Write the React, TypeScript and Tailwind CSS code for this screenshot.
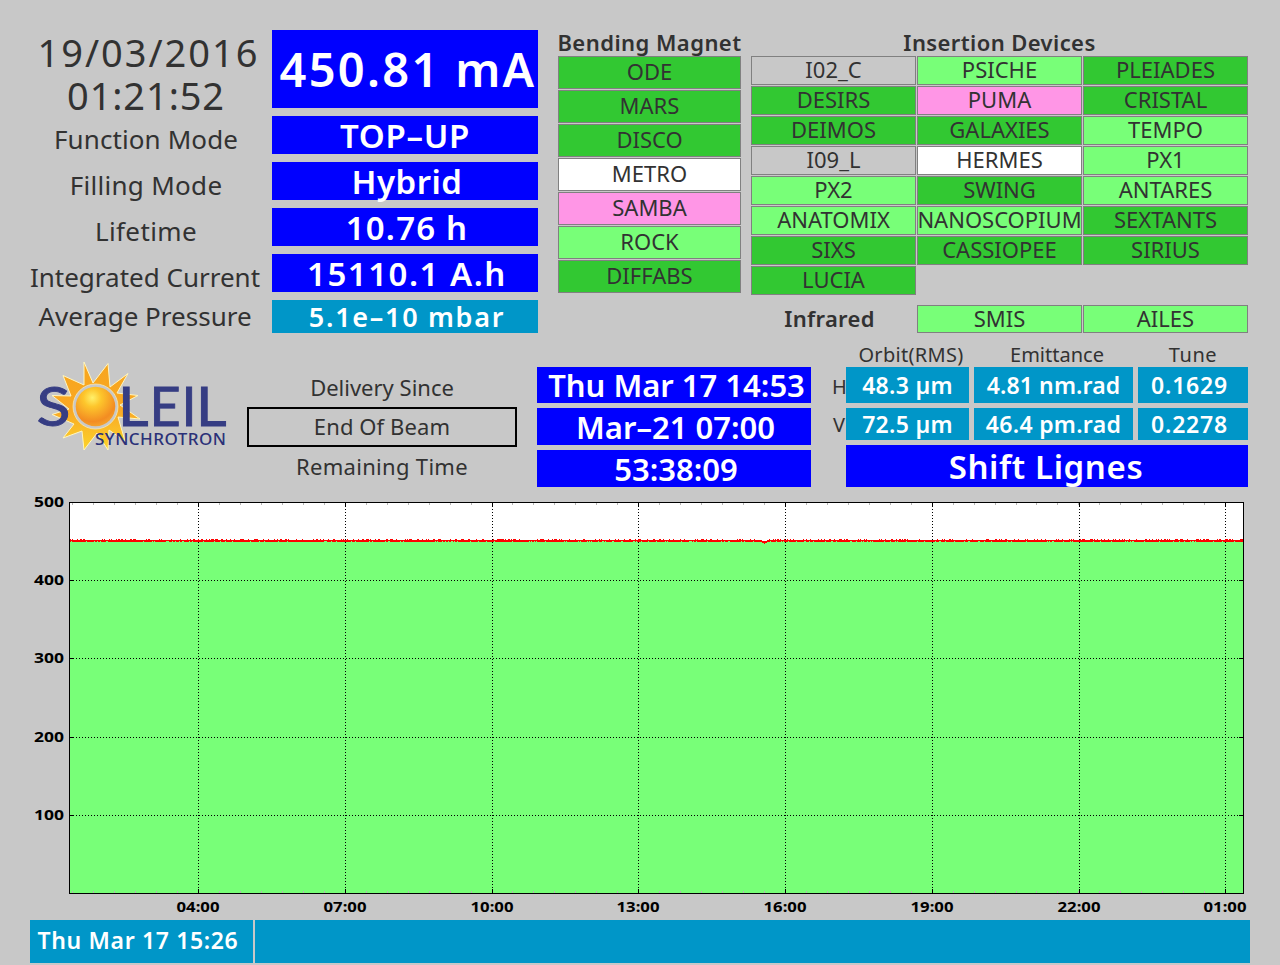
import clsx from 'clsx';

type Status = 'open' | 'ready' | 'fault' | 'closed' | 'none';

const statusColor: Record<Status, string> = {
  open: 'bg-[#32c832]',
  ready: 'bg-[#78ff78]',
  fault: 'bg-[#ff96e6]',
  closed: 'bg-white',
  none: 'bg-transparent',
};

type Line = { name: string; status: Status };

const bendingMagnets: Line[] = [
  { name: 'ODE', status: 'open' },
  { name: 'MARS', status: 'open' },
  { name: 'DISCO', status: 'open' },
  { name: 'METRO', status: 'closed' },
  { name: 'SAMBA', status: 'fault' },
  { name: 'ROCK', status: 'ready' },
  { name: 'DIFFABS', status: 'open' },
];

const insertionDevices: Line[] = [
  { name: 'I02_C', status: 'none' },
  { name: 'PSICHE', status: 'ready' },
  { name: 'PLEIADES', status: 'open' },
  { name: 'DESIRS', status: 'open' },
  { name: 'PUMA', status: 'fault' },
  { name: 'CRISTAL', status: 'open' },
  { name: 'DEIMOS', status: 'open' },
  { name: 'GALAXIES', status: 'open' },
  { name: 'TEMPO', status: 'ready' },
  { name: 'I09_L', status: 'none' },
  { name: 'HERMES', status: 'closed' },
  { name: 'PX1', status: 'ready' },
  { name: 'PX2', status: 'ready' },
  { name: 'SWING', status: 'open' },
  { name: 'ANTARES', status: 'ready' },
  { name: 'ANATOMIX', status: 'ready' },
  { name: 'NANOSCOPIUM', status: 'ready' },
  { name: 'SEXTANTS', status: 'open' },
  { name: 'SIXS', status: 'open' },
  { name: 'CASSIOPEE', status: 'open' },
  { name: 'SIRIUS', status: 'open' },
  { name: 'LUCIA', status: 'open' },
];

function LineCell({ line, className }: { line: Line; className: string }) {
  return (
    <div
      className={clsx(
        'flex items-center justify-center border border-[#808080] pb-[3px] text-[22px] leading-none whitespace-nowrap',
        statusColor[line.status],
        className,
      )}
    >
      {line.name}
    </div>
  );
}

function Value({ children, className }: { children: string; className: string }) {
  return (
    <div className={clsx('flex items-center justify-center leading-none font-semibold whitespace-nowrap text-white', className)}>
      {children}
    </div>
  );
}

/** Date, machine modes and beam current. */
function MachinePanel() {
  return (
    <section className="flex h-[303px] w-[518px]">
      <div className="flex w-[252px] flex-col items-center text-[26px] leading-none whitespace-nowrap">
        <div className="flex h-[43px] items-center pl-[5px] text-[38px] tracking-[2px]">19/03/2016</div>
        <div className="flex h-[43px] items-center text-[38px] tracking-[0.9px]">01:21:52</div>
        <div className="flex h-[46px] items-center tracking-[0.1px]">Function Mode</div>
        <div className="flex h-[46px] items-center tracking-[0.3px]">Filling Mode</div>
        <div className="flex h-[46px] items-center tracking-[0.4px]">Lifetime</div>
        <div className="flex h-[46px] items-center pr-[2px]">Integrated Current</div>
        <div className="flex h-[33px] items-center pr-[2px] pb-0.5">Average Pressure</div>
      </div>
      <div className="flex w-[266px] flex-col gap-2 text-[33px]">
        <Value className="h-[78px] bg-[#0000ff] pl-1.5 text-[47px] tracking-[2.3px]">450.81 mA</Value>
        <Value className="h-[38px] bg-[#0000ff] tracking-[0.7px]">TOP–UP</Value>
        <Value className="h-[38px] bg-[#0000ff] pl-1 tracking-[0.5px]">Hybrid</Value>
        <Value className="h-[38px] bg-[#0000ff] pl-1 tracking-[1.2px]">10.76 h</Value>
        <Value className="h-[38px] bg-[#0000ff] pl-1 tracking-[1.5px]">15110.1 A.h</Value>
        <Value className="h-[33px] bg-[#0096c8] pl-1 text-[27px] tracking-[1.7px]">5.1e–10 mbar</Value>
      </div>
    </section>
  );
}

const panelHeading = 'flex items-center justify-center text-[22px] leading-none font-semibold whitespace-nowrap';

function BeamlinePanel() {
  return (
    <section className="flex gap-2.5">
      <div className="w-[183px]">
        <h2 className={clsx(panelHeading, 'h-[26px] pb-0.5 tracking-[0.45px]')}>Bending Magnet</h2>
        <div className="flex flex-col gap-px">
          {bendingMagnets.map((line) => (
            <LineCell key={line.name} line={line} className="h-[33px]" />
          ))}
        </div>
      </div>
      <div className="w-[497px]">
        <h2 className={clsx(panelHeading, 'h-[26px] pb-0.5 tracking-[0.4px]')}>Insertion Devices</h2>
        <div className="grid grid-cols-3 gap-px">
          {insertionDevices.map((line) => (
            <LineCell key={line.name} line={line} className="h-[29px]" />
          ))}
        </div>
        <div className="mt-2.5 grid grid-cols-3 gap-px">
          <h2 className={clsx(panelHeading, 'h-7 pr-2 pb-0.5 tracking-[0.3px]')}>Infrared</h2>
          <LineCell line={{ name: 'SMIS', status: 'ready' }} className="h-7" />
          <LineCell line={{ name: 'AILES', status: 'ready' }} className="h-7" />
        </div>
      </div>
    </section>
  );
}

function Logo() {
  return (
    <svg width="196" height="100" viewBox="34 358 196 100" className="-mt-[9px] block">
      <defs>
        <radialGradient id="disc" cx="0.42" cy="0.28" r="0.75">
          <stop offset="0" stopColor="#fff06a" />
          <stop offset="0.3" stopColor="#fdc62c" />
          <stop offset="0.8" stopColor="#f38c22" />
          <stop offset="1" stopColor="#f5a52c" />
        </radialGradient>
        <linearGradient id="rays" x1="0" y1="0" x2="0" y2="1">
          <stop offset="0" stopColor="#f7a51c" />
          <stop offset="0.55" stopColor="#f9a825" />
          <stop offset="1" stopColor="#fcd42b" />
        </linearGradient>
      </defs>
      <path
        d="M84 362 L93 383 L108 363.500 L110 387 L128 373.500 L117 393 L138 395.500 L120 405 L140 419 L118 417 L125 441 L109 430 L108 450 L97 433 L84 450 L82 431 L63 438 L74 424 L52 414.500 L69 409 L52 395.500 L71 396 L63 375.500 L84 385 Z"
        fill="url(#rays)"
        stroke="#fff6c0"
        strokeWidth="1"
      />
      <circle cx="95.500" cy="406.500" r="22.500" fill="#c8c8c8" stroke="#f6e7b4" strokeWidth="0.8" />
      <circle cx="95.500" cy="406.500" r="19.800" fill="url(#disc)" />
      <g fill="#363d83" stroke="#363d83" fontFamily="Lato, sans-serif" fontSize="54" strokeWidth="0.9">
        <text x="36.500" y="426" textLength="34" lengthAdjust="spacingAndGlyphs">
          S
        </text>
        <text x="118" y="426" textLength="30.500" lengthAdjust="spacingAndGlyphs">
          L
        </text>
        <text x="149.500" y="426">
          E
        </text>
        <text x="181.500" y="426">
          I
        </text>
        <text x="196" y="426" textLength="30.500" lengthAdjust="spacingAndGlyphs">
          L
        </text>
      </g>
      <text x="95" y="445" textLength="131" fill="#2b3178" fontFamily="Noto Sans, sans-serif" fontSize="17" fontWeight="500">
        SYNCHROTRON
      </text>
    </svg>
  );
}

function DeliveryPanel() {
  return (
    <section className="flex h-[120px] w-[777px] text-[22px] leading-none">
      <div className="w-[213px]">
        <Logo />
      </div>
      <div className="flex w-[270px] flex-col items-center">
        <div className="flex h-10 items-center">Delivery Since</div>
        <div className="flex h-10 w-full items-center justify-center border-2 border-black pb-0.5 tracking-[0.1px]">
          End Of Beam
        </div>
        <div className="flex h-10 items-center pb-0.5 tracking-[0.3px]">Remaining Time</div>
      </div>
      <div className="ml-5 flex w-[274px] flex-col gap-[5px] text-[31px]">
        <Value className="h-9 bg-[#0000ff] pl-[5px]">Thu Mar 17 14:53</Value>
        <Value className="h-[37px] bg-[#0000ff] pt-px pl-[3px]">Mar–21 07:00</Value>
        <Value className="h-[37px] bg-[#0000ff] pt-px pl-1">53:38:09</Value>
      </div>
    </section>
  );
}

function OpticsPanel() {
  return (
    <section className="-mt-6 ml-[21px] w-[416px] text-[20px] leading-none">
      <div className="grid grid-cols-[9px_123px_159px_110px] gap-x-[5px]">
        <span />
        <span className="flex h-6 items-center justify-center pl-[7px] tracking-[0.3px]">Orbit(RMS)</span>
        <span className="flex h-6 items-center justify-center pl-[7px]">Emittance</span>
        <span className="flex h-6 items-center justify-center tracking-[0.6px]">Tune</span>
      </div>
      <div className="flex">
        <div className="flex w-3.5 flex-col">
          <span className="flex h-10 items-center">H</span>
          <span className="flex h-9 items-center pl-px">V</span>
        </div>
        <div className="flex flex-col gap-[5px] text-[23px]">
          <div className="flex gap-[5px]">
            <Value className="h-9 w-[123px] bg-[#0096c8] tracking-[0.3px]">48.3 µm</Value>
            <Value className="h-9 w-[159px] bg-[#0096c8] tracking-[0.1px]">4.81 nm.rad</Value>
            <Value className="h-9 w-[110px] bg-[#0096c8] pr-[7px] tracking-[0.8px]">0.1629</Value>
          </div>
          <div className="flex gap-[5px]">
            <Value className="h-8 w-[123px] bg-[#0096c8] tracking-[0.3px]">72.5 µm</Value>
            <Value className="h-8 w-[159px] bg-[#0096c8] tracking-[0.3px]">46.4 pm.rad</Value>
            <Value className="h-8 w-[110px] bg-[#0096c8] pr-[7px] tracking-[0.8px]">0.2278</Value>
          </div>
          <Value className="h-[42px] bg-[#0000ff] pr-0.5 text-[33px] tracking-[0.6px]">Shift Lignes</Value>
        </div>
      </div>
    </section>
  );
}

const hours = [
  { label: '04:00', x: 198 },
  { label: '07:00', x: 345 },
  { label: '10:00', x: 492 },
  { label: '13:00', x: 638 },
  { label: '16:00', x: 785 },
  { label: '19:00', x: 932 },
  { label: '22:00', x: 1079 },
  { label: '01:00', x: 1225 },
];

const currents = [
  { label: '500', y: 502 },
  { label: '400', y: 580 },
  { label: '300', y: 658 },
  { label: '200', y: 737 },
  { label: '100', y: 815 },
];

const minorTicks = Array.from({ length: 56 }, (_, i) => Math.round(72.3 + i * 20.96));

// small top-up ripple around 450 mA, with one short dip
const noise = (i: number) => Math.abs(Math.sin(i * 12.9898) * 43758.5453) % 1;
const ripple = Array.from({ length: 1173 }, (_, i) => {
  const x = 70 + i;
  if (x >= 762 && x <= 766) return `M${x} 541h1v${x === 764 ? 3 : 2}h-1z`;
  const n = noise(i);
  if (n < 0.3) return `M${x} 539h1v3h-1z`;
  return n < 0.85 ? `M${x} 540h1v2h-1z` : `M${x} 540h1v1h-1z`;
}).join('');

function CurrentChart() {
  return (
    <svg width="1280" height="424" viewBox="0 496 1280 424" className="block overflow-visible">
      <g shapeRendering="crispEdges">
        <rect x="70" y="503" width="1173" height="390" fill="#fff" />
        <rect x="70" y="541" width="1173" height="352" fill="#78ff78" />
        {minorTicks.map((x) => (
          <path key={x} d={`M${x + 0.5} 503v2M${x + 0.5} 891v2`} stroke="#b4b4b4" />
        ))}
        {hours.map(({ label, x }) => (
          <g key={label}>
            <path d={`M${x + 0.5} 503V893`} stroke="#000" strokeDasharray="1 2" />
            <path d={`M${x + 0.5} 503v4M${x + 0.5} 889v4`} stroke="#000" />
          </g>
        ))}
        {currents.slice(1).map(({ label, y }) => (
          <g key={label}>
            <path d={`M70 ${y + 0.5}H1243`} stroke="#000" strokeDasharray="1 2" />
            <path d={`M70 ${y + 0.5}h4M1239 ${y + 0.5}h4`} stroke="#000" />
          </g>
        ))}
        <path d={ripple} fill="#ff0000" />
        <rect x="69.500" y="502.500" width="1174" height="391" fill="none" stroke="#000" />
      </g>
      <g fontSize="15" fontWeight="700" fill="#000">
        {currents.map(({ label, y }) => (
          <text key={label} x="34" y={y + 5} textLength="30" lengthAdjust="spacingAndGlyphs">
            {label}
          </text>
        ))}
        {hours.map(({ label, x }) => (
          <text key={label} x={x - 21.5} y="912" textLength="43" lengthAdjust="spacingAndGlyphs">
            {label}
          </text>
        ))}
      </g>
    </svg>
  );
}

export default function App() {
  return (
    <div className="h-[965px] w-[1280px] overflow-hidden bg-[#c8c8c8] font-['Noto_Sans','Open_Sans',sans-serif] text-[#323232]">
      <div className="flex h-[343px] gap-5 pt-[30px] pl-5">
        <MachinePanel />
        <BeamlinePanel />
      </div>
      <div className="flex h-[153px] pt-6 pl-[34px]">
        <DeliveryPanel />
        <OpticsPanel />
      </div>
      <CurrentChart />
      <footer className="ml-[30px] flex h-[43px] w-[1220px] gap-0.5 text-[23px]">
        <Value className="w-[223px] bg-[#0096c8] pr-[7px] pb-[3px] tracking-[0.65px]">Thu Mar 17 15:26</Value>
        <div className="flex-1 bg-[#0096c8]" />
      </footer>
    </div>
  );
}
